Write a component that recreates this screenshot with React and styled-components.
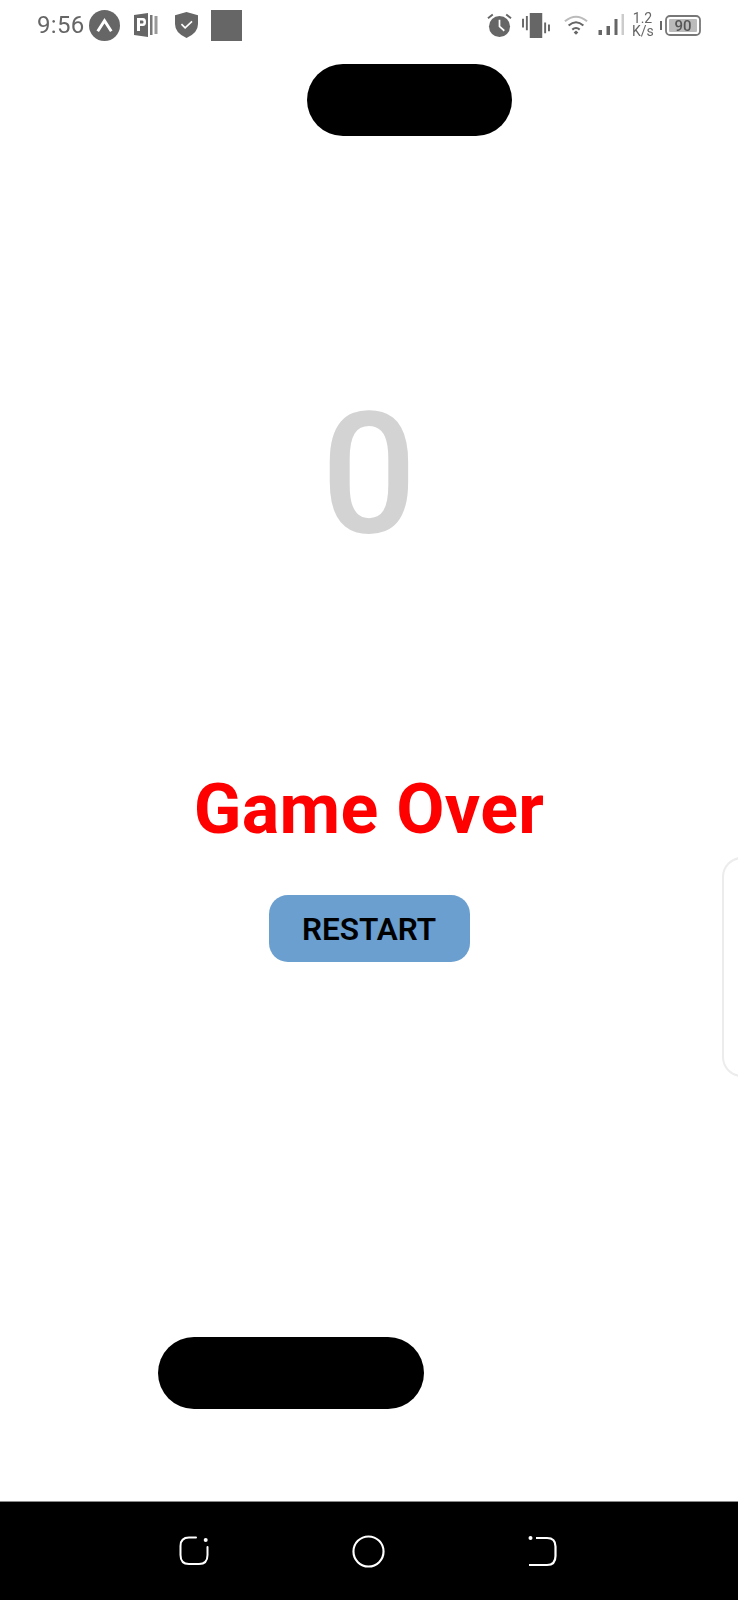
import React from "react";
import styled, { createGlobalStyle } from "styled-components";

const Global = createGlobalStyle`
  html, body { margin: 0; padding: 0; background: #fff; }
  * { box-sizing: border-box; }
`;
const Screen = styled.div`
  width: 738px; height: 1600px; display: flex; flex-direction: column;
  background: #fff; font-family: Roboto, "Liberation Sans", sans-serif; overflow: hidden;
`;
const StatusBar = styled.div`
  height: 50px; flex: none; display: flex; align-items: center; justify-content: space-between;
  padding: 0 37px 0 37px; color: #666; filter: blur(0.4px);
`;
const StatusGroup = styled.div`display: flex; align-items: center;`;
const Clock = styled.span`font-size: 24px; font-weight: 400; letter-spacing: 0.3px; line-height: 1; margin-right: 5px;`;
const Square = styled.div`width: 31px; height: 31px; background: #666; margin-left: 13px;`;
const Speed = styled.div`
  width: 21px; font-size: 14px; line-height: 13px; text-align: center; color: #666; margin: 0 7px; white-space: nowrap;
`;
const Field = styled.main`
  flex: 1; position: relative; display: flex; flex-direction: column; align-items: center;
`;
const Paddle = styled.div`
  position: absolute; background: #000; border-radius: 36px;
  left: ${p => p.$left}px; top: ${p => p.$top}px; width: ${p => p.$width}px; height: 72px;
`;
const Score = styled.div`
  margin-top: 319px; font-size: 168px; line-height: 211px; font-weight: 500; color: #d3d3d3;
`;
const GameOver = styled.h1`
  margin: 190px 0 0; font-size: 70px; line-height: 78px; font-weight: 700; color: #f00; letter-spacing: .3px;
`;
const Restart = styled.button`
  margin-top: 47px; width: 201px; height: 67px; border: 0; border-radius: 19px; background: #6a9fcf;
  color: #000; font: 600 31.500px/35px Roboto, "Liberation Sans", sans-serif; padding: 2px 0 0;
`;
const SidePanel = styled.div`
  position: absolute; left: 722px; top: 807px; width: 40px; height: 220px; background: #fff;
  border: 2px solid #ececec; border-radius: 24px;
`;
const NavBar = styled.nav`
  height: 99px; flex: none; background: #000; border-top: 1px solid #8a8a8a;
  display: grid; grid-template-columns: 178px 32px 141px 34px 142px 32px;
  align-items: center;
`;
const NavSlot = styled.div`grid-column: ${p => p.$col}; display: flex; justify-content: center; align-items: center;`;
const IconSvg = styled.svg`display: block; flex: none; margin-left: ${p => p.$ml || 0}px;`;

const LogoA = () => (
  <IconSvg width="31" height="31" viewBox="0 0 32 32">
    <circle cx="16" cy="16" r="16" fill="#666" />
    <path d="M9 22 L16 11 L23 22" fill="none" stroke="#fff" strokeWidth="3" />
  </IconSvg>
);
const Publisher = () => (
  <IconSvg $ml={13} width="25" height="24" viewBox="0 0 25 24">
    <path d="M1 2 L15 0 V24 L1 22Z" fill="#666" />
    <path d="M17 2 H19.500 V22 H17Z" fill="#777" />
    <path d="M21.500 3 H24.500 V21 H21.500Z" fill="#999" />
    <path d="M4 5 H10 Q13 5 13 9 Q13 13 10 13 H7 V18 H4Z" fill="#fff" />
    <path d="M7 7.500 H9.500 Q10.500 7.500 10.500 9 Q10.500 10.500 9.500 10.500 H7Z" fill="#666" />
  </IconSvg>
);
const Shield = () => (
  <IconSvg $ml={17} width="23" height="26" viewBox="0 0 25 28">
    <path d="M12.500 0 L25 3.500 V13 Q25 23 12.500 28 Q0 23 0 13 V3.500Z" fill="#666" />
    <path d="M7 13 L11 17 L18.500 10" fill="none" stroke="#fff" strokeWidth="1.800" />
  </IconSvg>
);
const Alarm = () => (
  <IconSvg width="25" height="24" viewBox="0 0 26 25">
    <circle cx="13" cy="14" r="11" fill="#666" />
    <path d="M13 7 V14 L18 18.500" fill="none" stroke="#fff" strokeWidth="1.800" />
    <path d="M1 5.500 L6 1.500 M25 5.500 L20 1.500" stroke="#666" strokeWidth="2" />
  </IconSvg>
);
const Vibrate = () => (
  <IconSvg $ml={10} width="28" height="25" viewBox="0 0 29 26">
    <path d="M8 0 H21 V26 H8Z" fill="#666" />
    <path d="M0 6 H2 V15 H0Z M4 3 H6 V18 H4Z M23 10 H25 V21 H23Z M27 12 H29 V19 H27Z" fill="#666" />
  </IconSvg>
);
const Wifi = () => (
  <IconSvg $ml={14} width="24" height="22" viewBox="0 0 26 22">
    <path d="M1 7 Q13 -3 25 7" fill="none" stroke="#bbb" strokeWidth="2.200" />
    <path d="M5 11.500 Q13 4.500 21 11.500" fill="none" stroke="#666" strokeWidth="2.200" />
    <path d="M9 16 Q13 12.500 17 16" fill="none" stroke="#666" strokeWidth="2.200" />
    <path d="M10.500 19 L13 17 L15.500 19 L13 21.500Z" fill="#666" />
  </IconSvg>
);
const Signal = () => (
  <IconSvg $ml={10} width="27" height="22" viewBox="0 0 26 22">
    <path d="M0 16 H3.500 V21 H0Z M8 12 H11.500 V21 H8Z M16 5 H19 V21 H16Z" fill="#666" />
    <path d="M23 0 H25.500 V21 H23Z" fill="#ccc" />
  </IconSvg>
);
const Battery = () => (
  <IconSvg width="41" height="21" viewBox="0 0 41 21">
    <path d="M0 6 H2 V15 H0Z" fill="#666" />
    <rect x="6" y="1" width="34" height="19" rx="4" fill="#fff" stroke="#777" strokeWidth="1.800" />
    <rect x="9" y="4" width="28" height="13" rx="1" fill="#bbb" />
    <text x="23" y="16" textAnchor="middle" fontFamily="Roboto, sans-serif" fontWeight="500" fontSize="15" fill="#555">90</text>
  </IconSvg>
);
const RecentsIcon = () => (
  <IconSvg width="32" height="32" viewBox="0 0 32 32">
    <path d="M18 2.500 H11 Q2.500 2.500 2.500 11 V20 Q2.500 29 11 29 H21 Q29.500 29 29.500 20 V12" fill="none" stroke="#fff" strokeWidth="2" strokeLinecap="round" />
    <circle cx="27.700" cy="5" r="2" fill="#fff" />
  </IconSvg>
);
const HomeIcon = () => (
  <IconSvg width="33" height="33" viewBox="0 0 34 34">
    <circle cx="17" cy="17" r="15.500" fill="none" stroke="#fff" strokeWidth="2.200" />
  </IconSvg>
);
const BackIcon = () => (
  <IconSvg width="32" height="32" viewBox="0 0 32 32">
    <path d="M9 3 H20 Q28.500 3 28.500 11.500 V21 Q28.500 30 20 30 H2" fill="none" stroke="#fff" strokeWidth="2.200" />
    <circle cx="3.500" cy="3" r="2" fill="#fff" />
  </IconSvg>
);

export default function App() {
  return (
    <Screen>
      <Global />
      <StatusBar>
        <StatusGroup>
          <Clock>9:56</Clock>
          <LogoA />
          <Publisher />
          <Shield />
          <Square />
        </StatusGroup>
        <StatusGroup>
          <Alarm />
          <Vibrate />
          <Wifi />
          <Signal />
          <Speed>1.2<br />K/s</Speed>
          <Battery />
        </StatusGroup>
      </StatusBar>
      <Field>
        <Paddle $left={307} $top={14} $width={205} />
        <Score>0</Score>
        <GameOver>Game Over</GameOver>
        <Restart>RESTART</Restart>
        <Paddle $left={158} $top={1287} $width={266} />
        <SidePanel />
      </Field>
      <NavBar>
        <NavSlot $col={2}><RecentsIcon /></NavSlot>
        <NavSlot $col={4}><HomeIcon /></NavSlot>
        <NavSlot $col={6}><BackIcon /></NavSlot>
      </NavBar>
    </Screen>
  );
}
